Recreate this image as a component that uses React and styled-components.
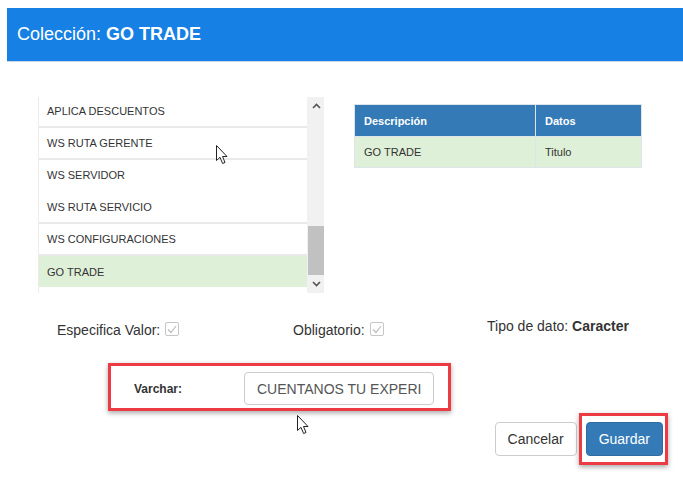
import styled, { createGlobalStyle } from 'styled-components';

const GlobalStyle = createGlobalStyle`
  html, body {
    margin: 0;
    padding: 0;
    background: #fff;
    font-family: "Liberation Sans", Arial, sans-serif;
    color: #333;
  }
`;

const Modal = styled.div`
  position: relative;
  margin: 8px 0 0 7px;
  width: 676px;
  height: 480px;
`;

const Header = styled.header`
  height: 53px;
  background: #1780e5;
  border-bottom: 1px solid #c9d9ea;
  display: flex;
  align-items: center;
  padding-left: 10px;
  color: #fff;
  font-size: 18px;

  b {
    font-weight: bold;
    margin-left: 5px;
  }
`;

const Body = styled.section`
  padding: 35px 0 0 31px;
`;

const TopRow = styled.div`
  display: flex;
  align-items: flex-start;
  gap: 30px;
`;

const ListBox = styled.div`
  display: flex;
  width: 286px;
  height: 196px;
  border-left: 1px solid #ececec;
  box-sizing: border-box;
`;

const Viewport = styled.div`
  flex: 1;
  height: 190px;
  overflow: hidden;
`;

const Track = styled.ul`
  list-style: none;
  margin: -1px 0 0;
  padding: 0;
`;

const Item = styled.li`
  height: 32px;
  box-sizing: border-box;
  display: flex;
  align-items: center;
  padding: 0 0 1px 8px;
  font-size: 11px;
  text-transform: uppercase;
  color: #333;
  background: ${p => (p.selected ? '#dff0d8' : '#fff')};
  border-bottom: 2px solid ${p => (p.noBorder ? 'transparent' : '#e9e9e9')};
  &:last-child { border-bottom: none; }
`;

const Scrollbar = styled.div`
  width: 17px;
  background: #f1f1f1;
  display: flex;
  flex-direction: column;
  align-items: center;
  justify-content: space-between;
  padding: 6px 0 6px 1px;
  box-sizing: border-box;
`;

const Thumb = styled.div`
  width: 16px;
  height: 49px;
  background: #c1c1c1;
  margin-top: auto;
  margin-bottom: 6px;
`;

const Table = styled.table`
  margin-top: 7px;
  width: 288px;
  border-collapse: collapse;
  font-size: 11px;

  th, td {
    text-align: left;
    padding: 0 9px;
    border: 1px solid #dde4ea;
  }
  th {
    height: 31px;
    background: #337ab7;
    color: #fff;
    font-weight: bold;
  }
  td {
    height: 30px;
    background: #dff0d8;
    color: #333;
  }
`;

const CheckRow = styled.div`
  display: grid;
  grid-template-columns: 236px 194px auto;
  align-items: center;
  margin: 27px 0 0 19px;
  font-size: 14px;
  height: 20px;
`;

const Field = styled.label`
  display: flex;
  align-items: center;
  gap: 5px;
  margin-top: ${p => (p.raised ? '-8px' : '0')};

  b { font-weight: bold; }
`;

const CheckBox = styled.span`
  width: 12px;
  height: 12px;
  border: 1px solid #c6c6c6;
  border-radius: 2px;
  background: #fff;
  display: inline-flex;
  align-items: center;
  justify-content: center;
  margin-top: -2px;
`;

const Highlight = styled.div`
  border: 3px solid #ec3b42;
  box-shadow: 0 2px 5px rgba(0, 0, 0, 0.35);
  box-sizing: border-box;
`;

const VarcharBox = styled(Highlight)`
  margin: 23px 0 0 70px;
  width: 343px;
  height: 48px;
  display: flex;
  align-items: center;
  padding: 3px 0 0 23px;
`;

const VarcharLabel = styled.span`
  font-size: 12px;
  font-weight: bold;
  width: 110px;
`;

const TextInput = styled.input`
  width: 190px;
  height: 33px;
  box-sizing: border-box;
  border: 1px solid #ccc;
  border-radius: 4px;
  padding: 0 12px;
  font-family: inherit;
  font-size: 14px;
  color: #555;
  background: #fff;
  outline: none;
`;

const Footer = styled.div`
  display: flex;
  justify-content: flex-end;
  align-items: center;
  gap: 2px;
  margin-top: 2px;
  padding-right: 15px;
`;

const Button = styled.button`
  height: 34px;
  padding: 0 12px;
  font-family: inherit;
  font-size: 14px;
  border-radius: 4px;
  border: 1px solid ${p => (p.primary ? '#2e6da4' : '#ccc')};
  background: ${p => (p.primary ? '#337ab7' : '#fff')};
  color: ${p => (p.primary ? '#fff' : '#333')};
`;

const ButtonHighlight = styled(Highlight)`
  padding: 6px 2px 6px 4px;
`;

const Pointer = styled.svg`
  position: absolute;
  left: ${p => p.x}px;
  top: ${p => p.y}px;
  pointer-events: none;
`;

const Chevron = ({ up }) => (
  <svg width="9" height="6" viewBox="0 0 9 6">
    <path
      d={up ? 'M1 5 L4.5 1.5 L8 5' : 'M1 1 L4.5 4.5 L8 1'}
      fill="none"
      stroke="#555"
      strokeWidth="1.6"
    />
  </svg>
);

const Check = () => (
  <CheckBox>
    <svg width="10" height="9" viewBox="0 0 10 9">
      <path d="M1 4.5 L4 7.5 L9 1" fill="none" stroke="#bcbcbc" strokeWidth="1.2" />
    </svg>
  </CheckBox>
);

const Cursor = ({ x, y }) => (
  <Pointer x={x} y={y} width="13" height="20" viewBox="0 0 13 20">
    <path
      d="M0.5 0.5 L0.5 15.5 L4 12.3 L6.6 18.5 L9 17.5 L6.5 11.5 L11 11.5 Z"
      fill="#fff"
      stroke="#222"
      strokeWidth="1"
      strokeLinejoin="round"
    />
  </Pointer>
);

const items = [
  { name: 'Aplica descuentos' },
  { name: 'WS Ruta gerente' },
  { name: 'WS Servidor', noBorder: true },
  { name: 'WS Ruta servicio' },
  { name: 'WS Configuraciones' },
  { name: 'GO TRADE', selected: true },
];

export default function App() {
  return (
    <>
      <GlobalStyle />
      <Modal>
        <Header>
          Colección: <b>GO TRADE</b>
        </Header>
        <Body>
          <TopRow>
            <ListBox>
              <Viewport>
                <Track>
                  {items.map(it => (
                    <Item key={it.name} selected={it.selected} noBorder={it.noBorder}>
                      {it.name}
                    </Item>
                  ))}
                </Track>
              </Viewport>
              <Scrollbar>
                <Chevron up />
                <Thumb />
                <Chevron />
              </Scrollbar>
            </ListBox>
            <Table>
              <thead>
                <tr>
                  <th style={{ width: 162 }}>Descripción</th>
                  <th>Datos</th>
                </tr>
              </thead>
              <tbody>
                <tr>
                  <td>GO TRADE</td>
                  <td>Titulo</td>
                </tr>
              </tbody>
            </Table>
          </TopRow>
          <CheckRow>
            <Field>
              Especifica Valor: <Check />
            </Field>
            <Field>
              Obligatorio: <Check />
            </Field>
            <Field raised>
              <span>Tipo de dato: <b>Caracter</b></span>
            </Field>
          </CheckRow>
          <VarcharBox>
            <VarcharLabel>Varchar:</VarcharLabel>
            <TextInput readOnly value="CUENTANOS TU EXPERI" />
          </VarcharBox>
        </Body>
        <Footer>
          <Button>Cancelar</Button>
          <ButtonHighlight>
            <Button primary>Guardar</Button>
          </ButtonHighlight>
        </Footer>
        <Cursor x={209} y={137} />
        <Cursor x={290} y={407} />
      </Modal>
    </>
  );
}
